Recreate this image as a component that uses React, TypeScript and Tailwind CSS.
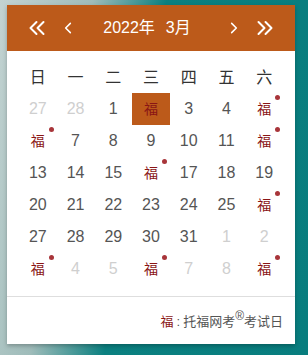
import React from "react";

type Cell = { label: string; muted?: boolean; fu?: boolean; dot?: boolean; selected?: boolean };

const weekdays = ["日", "一", "二", "三", "四", "五", "六"];

const n = (v: number, muted = false): Cell => ({ label: String(v), muted });
const fu = (dot = true, selected = false): Cell => ({ label: "福", fu: true, dot, selected });

const rows: Cell[][] = [
  [n(27, true), n(28, true), n(1), fu(false, true), n(3), n(4), fu()],
  [fu(), n(7), n(8), n(9), n(10), n(11), fu()],
  [n(13), n(14), n(15), fu(), n(17), n(18), n(19)],
  [n(20), n(21), n(22), n(23), n(24), n(25), fu()],
  [n(27), n(28), n(29), n(30), n(31), n(1, true), n(2, true)],
  [fu(), n(4, true), n(5, true), fu(), n(7, true), n(8, true), fu()],
];

function Chevron({ double, dir }: { double?: boolean; dir: "left" | "right" }) {
  const flip = dir === "right" ? "scale(-1,1) translate(-18,0)" : undefined;
  return (
    <svg width="18" height="16" viewBox="0 0 18 16" fill="none" stroke="white" strokeWidth="2" strokeLinecap="round" strokeLinejoin="round">
      <g transform={flip}>
        {double ? (
          <>
            <polyline points="8.5,2 2.5,8 8.5,14" />
            <polyline points="15.5,2 9.5,8 15.5,14" />
          </>
        ) : (
          <polyline points="12,2 6,8 12,14" />
        )}
      </g>
    </svg>
  );
}

export default function App() {
  return (
    <div
      className="w-[308px] h-[355px] pt-[5px] pl-[7px] bg-[linear-gradient(100deg,#c3d3d2_0%,#9fbcba_25%,#0b8080_45%,#087d7e_100%)]"
      style={{ fontFamily: '"Liberation Sans", Arial, "Noto Sans CJK SC", sans-serif' }}
    >
      <div className="w-[288px] h-[339px] bg-white shadow-[0_2px_4px_rgba(0,0,0,0.25)]">
        {/* header */}
        <div className="h-[46px] bg-[#bc5a1a] flex items-center text-white">
          <button className="ml-[20px] flex items-center justify-center w-[20px]">
            <Chevron double dir="left" />
          </button>
          <button className="ml-[14px] flex items-center justify-center w-[14px]">
            <Chevron dir="left" />
          </button>
          <div className="flex-1 flex justify-center items-center text-[16px] gap-[11px] -ml-[8px]">
            <span>2022年</span>
            <span>3月</span>
          </div>
          <button className="mr-[14px] flex items-center justify-center w-[14px]">
            <Chevron dir="right" />
          </button>
          <button className="mr-[20px] flex items-center justify-center w-[20px]">
            <Chevron double dir="right" />
          </button>
        </div>

        {/* body */}
        <div className="px-[12px] pt-[12px]">
          <div className="grid grid-cols-7 h-[30px] items-center text-center text-[16px] text-[#333]">
            {weekdays.map((w) => (
              <div key={w}>{w}</div>
            ))}
          </div>
          {rows.map((row, i) => (
            <div key={i} className="grid grid-cols-7 h-[32px]">
              {row.map((c, j) => (
                <div
                  key={j}
                  className={
                    "relative flex items-center justify-center " +
                    (c.selected ? "bg-[#bc5a1a] " : "") +
                    (c.fu
                      ? "text-[14px] text-[#8a1515]"
                      : c.muted
                      ? "text-[16px] text-[#cfcfcf]"
                      : "text-[16px] text-[#555]")
                  }
                >
                  {c.label}
                  {c.dot && (
                    <span className="absolute left-1/2 top-1/2 ml-[11px] -mt-[14px] w-[5px] h-[5px] rounded-full bg-[#a8353a]" />
                  )}
                </div>
              ))}
            </div>
          ))}
        </div>

        {/* footer */}
        <div className="mt-[11px] border-t border-[#dedede] h-[48px] flex items-center justify-end pr-[12px] pt-[3px] text-[13px] text-[#555]">
          <span className="text-[#8a1515]">福</span>
          <span className="mx-[3px]">:</span>
          <span>托福网考</span>
          <sup className="text-[12px] -top-[6px]">®</sup>
          <span>考试日</span>
        </div>
      </div>
    </div>
  );
}
